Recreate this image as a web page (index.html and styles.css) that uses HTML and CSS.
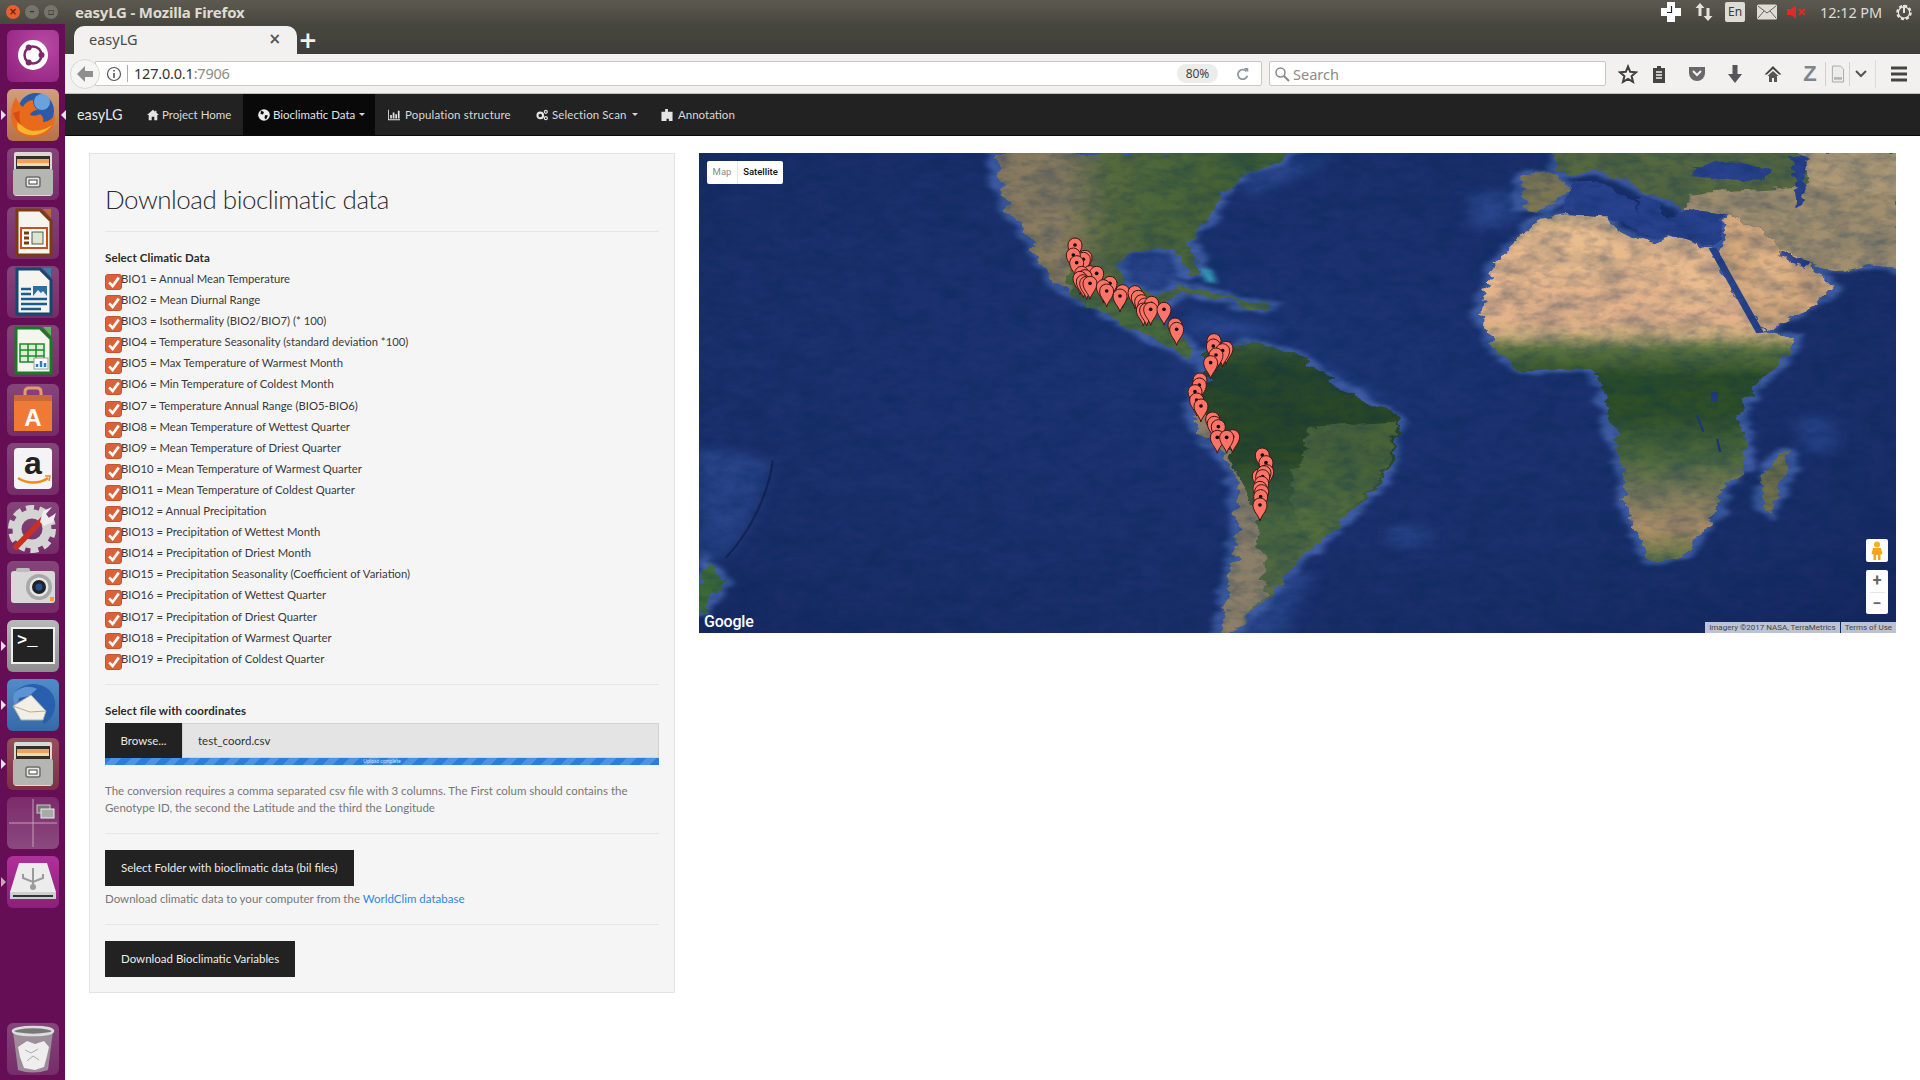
FILE: index.html
```html
<!DOCTYPE html>
<html lang="en">
<head>
<meta charset="utf-8">
<title>easyLG</title>
<link rel="stylesheet" href="styles.css">
</head>
<body>
<svg class="defs" width="0" height="0">
  <defs>
    <symbol id="i-cabinet" viewBox="0 0 52 52">
      <rect x="7" y="4" width="38" height="44" rx="2" fill="#d9d9d6"/>
      <rect x="9" y="8" width="34" height="13" fill="#33302c"/>
      <rect x="10" y="11" width="32" height="4" fill="#f0a15a"/>
      <rect x="10" y="15" width="32" height="3" fill="#f3d9ae"/>
      <rect x="6" y="21" width="40" height="26" rx="2" fill="#b5b5b1"/>
      <rect x="19" y="29" width="14" height="10" rx="2" fill="#e6e6e4" stroke="#6d6d6a" stroke-width="1.5"/>
      <rect x="22" y="32" width="8" height="4" fill="#fff" stroke="#444" stroke-width="1"/>
    </symbol>
    <symbol id="i-check" viewBox="0 0 17 16">
      <path d="M3.500 8.500 L7.500 12.500 L14.500 3" fill="none" stroke="#fff" stroke-width="3"/>
    </symbol>
    <g id="pin">
      <path d="M0 48C-4 30-21 20-21 0A21 21 0 1 1 21 0C21 20 4 30 0 48Z" fill="#fb7467" stroke="#3d1511" stroke-width="3"/>
      <circle r="5.500" fill="#120606"/>
    </g>
    <linearGradient id="g-na" x1="0" x2="1" y1="0" y2="0">
      <stop offset="0" stop-color="#85785e"/><stop offset=".22" stop-color="#8c7d60"/>
      <stop offset=".4" stop-color="#55693c"/><stop offset="1" stop-color="#3c5f31"/>
    </linearGradient>
    <linearGradient id="g-sa" x1="0" x2="0" y1="0" y2="1">
      <stop offset="0" stop-color="#3f5f30"/><stop offset=".1" stop-color="#28452a"/>
      <stop offset=".38" stop-color="#2b4825"/><stop offset=".6" stop-color="#4b673c"/>
      <stop offset=".8" stop-color="#536a40"/><stop offset="1" stop-color="#76735a"/>
    </linearGradient>
    <linearGradient id="g-af" x1="0" x2="0" y1="0" y2="1">
      <stop offset="0" stop-color="#c9ac82"/><stop offset=".06" stop-color="#e6b98c"/>
      <stop offset=".3" stop-color="#e4b28a"/><stop offset=".345" stop-color="#cfae7e"/>
      <stop offset=".39" stop-color="#5e7440"/><stop offset=".47" stop-color="#2e4f26"/>
      <stop offset=".58" stop-color="#2f5029"/><stop offset=".7" stop-color="#4f6a3c"/>
      <stop offset=".8" stop-color="#7a7a58"/><stop offset=".9" stop-color="#b09068"/>
      <stop offset="1" stop-color="#5f7443"/>
    </linearGradient>
    <radialGradient id="g-ocean" cx=".45" cy=".45" r=".8">
      <stop offset="0" stop-color="#1d3575"/><stop offset=".7" stop-color="#1a2e69"/><stop offset="1" stop-color="#15265c"/>
    </radialGradient>
    <filter id="f-soft" x="-5%" y="-5%" width="110%" height="110%">
      <feTurbulence type="fractalNoise" baseFrequency=".035" numOctaves="3" seed="4" result="n"/>
      <feDisplacementMap in="SourceGraphic" in2="n" scale="26" xChannelSelector="R" yChannelSelector="G"/>
      <feGaussianBlur stdDeviation="1"/>
    </filter>
    <filter id="f-shelf" x="-10%" y="-10%" width="120%" height="120%">
      <feTurbulence type="fractalNoise" baseFrequency=".03" numOctaves="3" seed="4" result="n"/>
      <feDisplacementMap in="SourceGraphic" in2="n" scale="26" xChannelSelector="R" yChannelSelector="G"/>
      <feGaussianBlur stdDeviation="4"/>
    </filter>
    <filter id="f-haze" x="-20%" y="-20%" width="140%" height="140%"><feGaussianBlur stdDeviation="12"/></filter>
    <filter id="f-blur" x="-30%" y="-30%" width="160%" height="160%"><feGaussianBlur stdDeviation="4"/></filter>
    <filter id="f-grain" x="0" y="0" width="100%" height="100%">
      <feTurbulence type="fractalNoise" baseFrequency=".03 .05" numOctaves="5" seed="7"/>
      <feColorMatrix values="0 0 0 0 0  0 0 0 0 0.02  0 0 0 0 0.08  2.2 0 0 0 -0.85"/>
    </filter>
    <filter id="f-fine" x="0" y="0" width="100%" height="100%">
      <feTurbulence type="fractalNoise" baseFrequency=".07 .14" numOctaves="3" seed="11"/>
      <feColorMatrix values="0 0 0 0 0  0 0 0 0 0.02  0 0 0 0 0.1  3 0 0 0 -1.3"/>
    </filter>
    <g id="land">
      <path id="l-na" d="M385 9H770L750 40 705 70 680 140 660 210 638 272 655 365 640 375 622 292 560 300 545 345 560 410 600 432 640 402 612 450 590 482 612 530 650 608 640 622 560 522 482 432 440 290 400 180Z"/>
      <path d="M440 280 470 390 462 395 436 300Z"/>
      <path d="M622 402 665 420 705 452 670 440 620 412Z"/>
      <path d="M700 450 745 458 735 475 700 468Z"/>
      <path id="l-sa" d="M660 600 720 570 782 612 830 700 915 800 890 990 840 1100 775 1240 742 1330 692 1445 678 1445 700 1200 700 960 650 830 640 760 662 680Z"/>
      <path id="l-af" d="M1095 205 1132 190 1185 195 1190 235 1245 282 1262 255 1305 282 1320 300 1345 420 1385 545 1425 560 1420 610 1370 720 1355 790 1366 930 1336 1010 1320 1100 1282 1210 1240 1226 1205 1060 1205 960 1180 740 1165 650 1075 660 1040 600 1020 520 1030 360 1060 280Z"/>
      <path id="l-ar" d="M1340 190 1385 240 1420 300 1450 350 1476 405 1456 460 1388 540 1350 430 1325 300Z"/>
      <path id="l-eu" d="M1115 9H1563V360L1530 340 1480 360 1445 340 1410 290 1385 240 1340 190 1285 180 1260 150 1235 130 1205 90 1170 62 1135 70 1115 60Z"/>
      <path id="l-ib" d="M1072 78 1116 68 1136 118 1098 182 1070 170Z"/>
      <path d="M1415 890 1420 950 1395 1080 1385 1060 1388 970Z"/>
      <path d="M10 1230 36 1290 15 1340 0 1385V1290Z"/>
    </g>
  </defs>
</svg>

<div class="desktop">
  <header class="panel-top">
    <div class="win-btns">
      <span class="wb wb-close">×</span><span class="wb wb-min">–</span><span class="wb wb-max">▫</span>
    </div>
    <span class="win-title">easyLG - Mozilla Firefox</span>
    <div class="tray">
      <svg class="tr" viewBox="0 0 22 22" width="22" height="22"><path d="M7 1h8v6h6v8h-6v6H7v-6H1V7h6Z" fill="#fff"/><path d="M11.500 5v6.500H7" fill="none" stroke="#222" stroke-width="1.200"/></svg>
      <svg class="tr t-m11" viewBox="0 0 20 20" width="20" height="20"><path d="M6 1 1.500 6H4.500v8h3V6h3ZM14 19l4.500-5h-3V6h-3v8h-3Z" fill="#e6e3dc"/></svg>
      <span class="tr-en">En</span>
      <svg class="tr t-m11" viewBox="0 0 20 16" width="20" height="16"><rect width="20" height="15" y=".5" rx="1.500" fill="#dfdcd5"/><path d="M1 2l9 7 9-7M1 14l6-7M19 14l-6-7" fill="none" stroke="#55534d" stroke-width=".9"/></svg>
      <svg class="tr t-m8" viewBox="0 0 20 14" width="20" height="14"><path d="M0 4h4l5-4v14l-5-4H0Z" fill="#e12a22"/><path d="M12 4l6 6M18 4l-6 6" stroke="#e12a22" stroke-width="2"/></svg>
      <span class="tr-time">12:12 PM</span>
      <svg class="tr t-m14" viewBox="0 0 20 20" width="20" height="20"><circle cx="10" cy="10.500" r="6.500" fill="none" stroke="#e6e3dc" stroke-width="2.600" stroke-dasharray="3 2"/><circle cx="10" cy="10.500" r="5.600" fill="none" stroke="#e6e3dc" stroke-width="1.200"/><path d="M10 3v8" stroke="#e6e3dc" stroke-width="2"/></svg>
    </div>
  </header>

  <div class="below">
    <nav class="launcher">
      <div class="tile t-dash"><svg viewBox="0 0 52 52"><circle cx="26" cy="25" r="15" fill="#fff"/><circle cx="26" cy="25" r="8.500" fill="none" stroke="#7d2a6b" stroke-width="2.500"/><circle cx="34.500" cy="25" r="3" fill="#7d2a6b"/><circle cx="21.700" cy="17.500" r="3" fill="#7d2a6b"/><circle cx="21.700" cy="32.500" r="3" fill="#7d2a6b"/></svg></div>
      <div class="tile t-fox act act-r"><svg viewBox="0 0 52 52"><circle cx="29" cy="22" r="18" fill="#2a5aa8"/><circle cx="35" cy="13" r="8" fill="#6aa3dc"/><path d="M9 8C2 20 2 36 11 43c9 8 27 7 34-4 2-4 3-8 3-13-3 4-7 7-12 7 1-3 0-6-3-8-3 2-7 2-10 1 1-3 4-5 8-5-3-2-5-5-5-10-4 0-8 3-10 7-3-2-6-6-7-10Z" fill="#ea6a1c"/><path d="M11 41c9 8 25 7 34-5-8 6-20 8-27 3-3-2-5-4-7-7-1 3-1 6 0 9Z" fill="#f7b52e"/><path d="M6 24c2 6 5 10 8 12-2-5-2-10-1-14Z" fill="#d94a14"/></svg></div>
      <div class="tile"><svg viewBox="0 0 52 52"><use href="#i-cabinet"/></svg></div>
      <div class="tile"><svg viewBox="0 0 52 52"><path d="M10 3H33L44 14V48H10Z" fill="#f5f4ef" stroke="#7c3a12" stroke-width="3"/><path d="M36 2H44V11Z" fill="#c1662f"/><rect x="14" y="21" width="26" height="20" fill="#fff" stroke="#c8501d" stroke-width="2"/><path d="M17 26h5M17 31h5M17 36h5" stroke="#7c3a12" stroke-width="3"/><rect x="25" y="25" width="11" height="12" fill="#dbe7d0" stroke="#555"/></svg></div>
      <div class="tile"><svg viewBox="0 0 52 52"><path d="M10 3H33L44 14V48H10Z" fill="#f5f4ef" stroke="#15476f" stroke-width="3"/><path d="M36 2H44V11Z" fill="#3a7fb0"/><path d="M14 23h10M14 28h10M14 33h26M14 38h26M14 43h20" stroke="#1a5c8f" stroke-width="2.500"/><rect x="26" y="20" width="14" height="10" fill="#2e6e9e"/><path d="M26 30l5-6 3 3 2-2 4 5Z" fill="#eef"/></svg></div>
      <div class="tile"><svg viewBox="0 0 52 52"><path d="M9 3H33L44 14V48H9Z" fill="#f5f4ef" stroke="#187a22" stroke-width="3"/><path d="M36 2H44V11Z" fill="#5cb85c"/><path d="M13 19H37V37H13ZM13 25H37M13 31H37M21 19V37M29 19V37" fill="#dff0d8" stroke="#1b8a26" stroke-width="1.500"/><rect x="27" y="33" width="14" height="11" fill="#fff" stroke="#999"/><path d="M30 42v-3M34 42v-6M38 42v-4" stroke="#2a7ad0" stroke-width="2.500"/></svg></div>
      <div class="tile"><svg viewBox="0 0 52 52"><path d="M18 12V8q0-4 4-4h8q4 0 4 4v4" fill="none" stroke="#e69a70" stroke-width="3"/><rect x="7" y="11" width="38" height="36" fill="#ef7a35"/><rect x="7" y="11" width="38" height="6" fill="#c9683a"/><text x="26" y="42" class="sw-a">A</text></svg></div>
      <div class="tile"><svg viewBox="0 0 52 52"><rect x="7" y="5" width="38" height="41" rx="4" fill="#f4f4f4"/><text x="26" y="31" class="az-a">a</text><path d="M11 35c9 6 22 6 30 0" fill="none" stroke="#f08a1d" stroke-width="2.500"/><path d="M38 33l5 0-1 5" fill="none" stroke="#f08a1d" stroke-width="1.500"/></svg></div>
      <div class="tile"><svg viewBox="0 0 52 52"><circle cx="25" cy="27" r="15" fill="none" stroke="#d4d4d4" stroke-width="9"/><circle cx="25" cy="27" r="21" fill="none" stroke="#d4d4d4" stroke-width="6" stroke-dasharray="8 5.200"/><path d="M9 45 36 17" stroke="#c93020" stroke-width="5.500" stroke-linecap="round"/><path d="M33 20 36 9 45 5 39 12 42 16 49 11 46 20 37 24Z" fill="#eee"/></svg></div>
      <div class="tile"><svg viewBox="0 0 52 52"><rect x="4" y="10" width="44" height="32" rx="3" fill="#d8d8d8"/><rect x="9" y="7" width="14" height="4" rx="2" fill="#bdbdbd"/><circle cx="32" cy="26" r="13" fill="#a8a8a8"/><circle cx="32" cy="26" r="9.500" fill="#e8e8e8"/><circle cx="32" cy="26" r="7" fill="#222"/><circle cx="32" cy="26" r="3.500" fill="#23508c"/><rect x="43" y="36" width="4" height="4" fill="#f2a020"/></svg></div>
      <div class="tile t-term act"><svg viewBox="0 0 52 52"><rect x="4" y="7" width="44" height="37" fill="#eee"/><rect x="6" y="9" width="40" height="33" fill="#232323"/><text x="10" y="25" class="term-t">&gt;_</text></svg></div>
      <div class="tile t-bird act"><svg viewBox="0 0 52 52"><path d="M8 13C18 2 38 2 46 16c5 10 1 24-9 29-3-8-10-10-20-14Z" fill="#2a5fb0"/><path d="M8 13c6-5 15-7 22-3l-8 7-10 2-4 8-2-8Z" fill="#5d93d4"/><path d="M6 27 24 16 39 32 36 41 14 41Z" fill="#f3efe4" stroke="#aaa"/><path d="M6 27 23 33 39 32" fill="none" stroke="#b5ad9c"/></svg></div>
      <div class="tile t-files act"><svg viewBox="0 0 52 52"><use href="#i-cabinet"/></svg></div>
      <div class="tile t-wsp"><svg viewBox="0 0 52 52"><path d="M2 26H50M26 2V50" stroke="#c79dbc" stroke-width="1"/><rect x="30" y="8" width="13" height="8" fill="#777" stroke="#ccc"/><rect x="34" y="12" width="13" height="9" fill="#aaa" stroke="#eee"/></svg></div>
      <div class="tile t-usb act act-o"><svg viewBox="0 0 52 52"><path d="M12 7H40L49 36H3Z" fill="#ececec"/><rect x="3" y="36" width="46" height="7" fill="#cfcfcf"/><rect x="6" y="39" width="40" height="2" fill="#333"/><path d="M26 12V30M16 18v4l10 4 10-4v-4" fill="none" stroke="#9a9a9a" stroke-width="2"/><circle cx="26" cy="31" r="3" fill="#9a9a9a"/></svg></div>
      <div class="tile tile-trash"><svg viewBox="0 0 52 52"><path d="M6 8H46L41 47Q26 52 11 47Z" fill="#a8a8a8" fill-opacity=".75"/><ellipse cx="26" cy="8" rx="20" ry="4" fill="#777" stroke="#ddd" stroke-width="2.500"/><path d="M11 24l9-6 8 3 9-3 5 6-2 9-3 11-9 3-11-2-4-11Z" fill="#eee"/><path d="M18 27l6 3 7-4M20 38l6-5 6 4" stroke="#aaa" fill="none"/></svg></div>
    </nav>

    <div class="browser">
      <div class="tabs">
        <div class="tab"><span>easyLG</span><b class="tab-x">×</b></div>
        <span class="tab-new">+</span>
      </div>
      <div class="toolbar">
        <div class="back"><svg viewBox="0 0 20 20" width="20" height="20"><path d="M10 2 2 10l8 8v-5h8V7h-8Z" fill="#8f8f8c"/></svg></div>
        <div class="url">
          <svg class="url-i" viewBox="0 0 16 16" width="16" height="16"><circle cx="8" cy="8" r="6.500" fill="none" stroke="#555" stroke-width="1.200"/><path d="M8 7v5M8 4v1.500" stroke="#555" stroke-width="1.600"/></svg>
          <span class="url-text">127.0.0.1<em>:7906</em></span>
          <span class="url-zoom">80%</span>
          <svg class="url-r" viewBox="0 0 16 16" width="14" height="14"><path d="M12 5A5.500 5.500 0 1 0 13 10" fill="none" stroke="#8a97a5" stroke-width="2"/><path d="M9 1l5 0 0 5Z" fill="#8a97a5"/></svg>
        </div>
        <div class="search">
          <svg viewBox="0 0 16 16" width="16" height="16"><circle cx="6.500" cy="6.500" r="4.500" fill="none" stroke="#888" stroke-width="1.500"/><path d="M10 10l5 5" stroke="#888" stroke-width="2"/></svg>
          <span>Search</span>
        </div>
        <div class="tools">
          <svg class="ti ti-first" viewBox="0 0 20 20"><path d="M10 2.500 12.200 7.800 18 8.300 13.600 12.100 15 17.800 10 14.800 5 17.800 6.400 12.100 2 8.300 7.800 7.800Z" fill="none" stroke="#3f3f3f" stroke-width="2"/></svg>
          <svg class="ti ti-11" viewBox="0 0 20 20"><path d="M4 4h4V2h4v2h4v15H4Z" fill="#444"/><path d="M7 8h6M7 11h6M7 14h6" stroke="#f2f1ef" stroke-width="1.500"/></svg>
          <svg class="ti" viewBox="0 0 20 20"><path d="M2 3H18V9A8 8 0 0 1 2 9Z" fill="#68686a"/><path d="M6 7l4 4 4-4" fill="none" stroke="#f2f1ef" stroke-width="2"/></svg>
          <svg class="ti" viewBox="0 0 20 20"><path d="M7.500 1h5v9h4.500L10 19 3 10h4.500Z" fill="#55555a"/></svg>
          <svg class="ti ti-17" viewBox="0 0 20 20"><path d="M10 2 1.500 10.500H4L10 5l6 5.500h2.500Z" fill="#444"/><path d="M10 7 4.500 12H6v6h3v-4h2v4h3v-6h1.500Z" fill="#555"/></svg>
          <span class="ti-z">Z</span>
          <svg class="ti ti-doc" viewBox="0 0 20 22"><path d="M3 1H13L17 5V21H3Z" fill="#ececea" stroke="#9a9a9a"/><rect x="5" y="15" width="10" height="3" fill="#b0b0ae"/></svg>
          <svg class="ti ti-chev" viewBox="0 0 14 14"><path d="M2 4l5 5 5-5" fill="none" stroke="#555" stroke-width="2"/></svg>
          <span class="ti-sep"></span>
          <svg class="ti ti-menu" viewBox="0 0 20 20"><path d="M2 4h16M2 10h16M2 16h16" stroke="#444" stroke-width="3"/></svg>
        </div>
      </div>

      <div class="navbar">
        <a class="brand">easyLG</a>
        <a class="nav n1"><svg viewBox="0 0 14 12"><path d="M7 0 0 6h2v6h3.500V8h3v4H12V6h2L11 3.400V1H9.500v1.100Z" fill="#e4e4e4"/></svg>Project Home</a>
        <a class="nav n2 active"><svg viewBox="0 0 12 12"><circle cx="6" cy="6" r="5.800" fill="#eee"/><path d="M3 1.500 6 3 5 5.500 2.500 5ZM7 6l3 .5L8 10.500 6.500 9Z" fill="#090909"/></svg>Bioclimatic Data<i class="caret"></i></a>
        <a class="nav n3"><svg viewBox="0 0 14 12"><path d="M0 0h1v11h13v1H0ZM2.500 6h2v4h-2ZM5.500 3h2v7h-2ZM8.500 5h2v5h-2ZM11.500 1h2v9h-2Z" fill="#e4e4e4"/></svg>Population structure</a>
        <a class="nav n4"><svg viewBox="0 0 14 13"><circle cx="5" cy="7" r="3.300" fill="none" stroke="#e4e4e4" stroke-width="2.400"/><circle cx="11.500" cy="2.800" r="1.700" fill="none" stroke="#e4e4e4" stroke-width="1.400"/><circle cx="11.500" cy="10.200" r="1.700" fill="none" stroke="#e4e4e4" stroke-width="1.400"/></svg>Selection Scan<i class="caret"></i></a>
        <a class="nav n5"><svg viewBox="0 0 12 13"><path d="M4 0h3v3h5v10H8V10.500H5.500V13H0V3h4Z" fill="#e4e4e4"/></svg>Annotation</a>
      </div>

      <main class="page">
        <section class="well">
          <h2 class="h-title">Download bioclimatic data</h2>
          <hr>
          <label class="lbl lbl-first">Select Climatic Data</label>
          <ul class="bio">
            <li><span class="cb"><svg><use href="#i-check"/></svg></span>BIO1 = Annual Mean Temperature</li>
            <li><span class="cb"><svg><use href="#i-check"/></svg></span>BIO2 = Mean Diurnal Range</li>
            <li><span class="cb"><svg><use href="#i-check"/></svg></span>BIO3 = Isothermality (BIO2/BIO7) (* 100)</li>
            <li><span class="cb"><svg><use href="#i-check"/></svg></span>BIO4 = Temperature Seasonality (standard deviation *100)</li>
            <li><span class="cb"><svg><use href="#i-check"/></svg></span>BIO5 = Max Temperature of Warmest Month</li>
            <li><span class="cb"><svg><use href="#i-check"/></svg></span>BIO6 = Min Temperature of Coldest Month</li>
            <li><span class="cb"><svg><use href="#i-check"/></svg></span>BIO7 = Temperature Annual Range (BIO5-BIO6)</li>
            <li><span class="cb"><svg><use href="#i-check"/></svg></span>BIO8 = Mean Temperature of Wettest Quarter</li>
            <li><span class="cb"><svg><use href="#i-check"/></svg></span>BIO9 = Mean Temperature of Driest Quarter</li>
            <li><span class="cb"><svg><use href="#i-check"/></svg></span>BIO10 = Mean Temperature of Warmest Quarter</li>
            <li><span class="cb"><svg><use href="#i-check"/></svg></span>BIO11 = Mean Temperature of Coldest Quarter</li>
            <li><span class="cb"><svg><use href="#i-check"/></svg></span>BIO12 = Annual Precipitation</li>
            <li><span class="cb"><svg><use href="#i-check"/></svg></span>BIO13 = Precipitation of Wettest Month</li>
            <li><span class="cb"><svg><use href="#i-check"/></svg></span>BIO14 = Precipitation of Driest Month</li>
            <li><span class="cb"><svg><use href="#i-check"/></svg></span>BIO15 = Precipitation Seasonality (Coefficient of Variation)</li>
            <li><span class="cb"><svg><use href="#i-check"/></svg></span>BIO16 = Precipitation of Wettest Quarter</li>
            <li><span class="cb"><svg><use href="#i-check"/></svg></span>BIO17 = Precipitation of Driest Quarter</li>
            <li><span class="cb"><svg><use href="#i-check"/></svg></span>BIO18 = Precipitation of Warmest Quarter</li>
            <li><span class="cb"><svg><use href="#i-check"/></svg></span>BIO19 = Precipitation of Coldest Quarter</li>
          </ul>
          <hr class="hr-a">
          <label class="lbl lbl-file">Select file with coordinates</label>
          <div class="file">
            <span class="browse">Browse...</span>
            <span class="fname">test_coord.csv</span>
          </div>
          <div class="progress">Upload complete</div>
          <p class="help">The conversion requires a comma separated csv file with 3 columns. The First colum should contains the Genotype ID, the second the Latitude and the third the Longitude</p>
          <hr class="hr-b">
          <a class="btn">Select Folder with bioclimatic data (bil files)</a>
          <p class="help help-b">Download climatic data to your computer from the <a class="link">WorldClim database</a></p>
          <hr class="hr-b">
          <a class="btn btn-last">Download Bioclimatic Variables</a>
        </section>

        <section class="map">
          <svg class="map-svg" viewBox="0 0 1197 480" preserveAspectRatio="none">
            <rect width="1197" height="480" fill="url(#g-ocean)"/>
            <g transform="scale(.7678 .3356) translate(0 -9)">
              <g filter="url(#f-haze)" fill="#2f4b94" opacity=".75">
                <path d="M0 880 92 925 70 1090 35 1210 0 1240Z"/>
                <path d="M780 620 890 730 860 760 800 690Z"/>
                <path d="M740 1260 800 1260 760 1449 700 1449Z"/>
                <path d="M1430 790 1475 800 1480 900 1440 900Z"/>
                <path d="M900 1120 950 1120 950 1180 900 1180Z"/>
                <path d="M1000 130 1060 120 1070 210 1010 240Z"/>
                <path d="M700 60 830 10 790 70 720 140Z"/>
                <path d="M560 310 620 300 630 400 590 420 555 380Z"/>
                <path d="M640 480 760 540 700 570 630 540Z"/>
              </g>
              <path d="M96 925C92 1010 70 1130 35 1215" fill="none" stroke="#0e1a42" stroke-width="3" stroke-opacity=".65"/>
              <g fill="#3f5da6" stroke="#3f5da6" stroke-width="20" filter="url(#f-shelf)"><use href="#land"/></g>
              <path d="M652 350 668 358 674 398 660 392Z" fill="#3aa7c4" filter="url(#f-blur)"/>
              <g filter="url(#f-soft)">
                <use href="#l-na" fill="url(#g-na)"/>
                <path d="M480 350 540 380 560 420 600 440 590 485 612 530 650 608 640 622 560 522 482 432Z" fill="#4c6a3a"/>
                <path d="M440 280 470 390 462 395 436 300Z" fill="#8c7b58"/>
                <path d="M622 402 665 420 705 452 670 440 620 412Z" fill="#4f6b3c"/>
                <path d="M700 450 745 458 735 475 700 468Z" fill="#4f6b3c"/>
                <use href="#l-sa" fill="url(#g-sa)"/>
                <path d="M660 790 700 950 728 1100 738 1325 692 1445 678 1445 700 1200 700 960 650 830 640 770Z" fill="#8b7f68"/>
                <path d="M800 820 910 810 885 990 830 1100 790 1180 770 1000Z" fill="#556f3f" opacity=".7"/>
                <use href="#l-af" fill="url(#g-af)"/>
                <use href="#l-ar" fill="#d6a97c"/>
                <use href="#l-eu" fill="#55683f"/>
                <path d="M1290 130 1430 110 1563 40V360L1530 340 1480 360 1445 340 1410 290 1385 240 1340 190 1285 180Z" fill="#a08e6e"/>
                <path d="M1430 9H1563V130L1450 110Z" fill="#b09a76"/>
                <use href="#l-ib" fill="#7c7654"/>
                <path d="M1415 890 1420 950 1395 1080 1385 1060 1388 970Z" fill="#6f7148"/>
                <path d="M10 1230 36 1290 15 1340 0 1385V1290Z" fill="#3d6a38"/>
              </g>
              <g fill="#2a438e" filter="url(#f-soft)">
                <path d="M1135 120 1120 190 1185 198 1245 272 1262 252 1318 285 1338 188 1290 178 1262 205 1235 135 1215 150 1225 190 1195 120 1170 88 1140 92Z"/>
                <path d="M1292 45 1330 30 1398 55 1388 92 1340 88 1295 78Z"/>
                <path d="M1420 14 1440 24 1440 165 1428 175 1430 100Z"/>
                <path d="M1410 298 1445 340 1438 352 1405 315Z"/>
              </g>
              <path d="M1320 292 1382 545" fill="none" stroke="#2a438e" stroke-width="10"/>
              <path d="M1318 722h9v28h-9Z" fill="#1f3a7d"/>
              <path d="M1300 790 1308 840M1326 860 1330 900" stroke="#1f3a7d" stroke-width="3"/>
              <g fill="#efc191" opacity=".5" filter="url(#f-haze)">
                <path d="M1090 240 1180 230 1200 340 1110 400Z"/>
                <path d="M1260 330 1320 360 1340 470 1270 480Z"/>
                <path d="M1370 270 1420 340 1410 430 1380 440Z"/>
              </g>
            </g>
            <rect width="1197" height="480" filter="url(#f-grain)" opacity=".24"/>
            <rect width="1197" height="480" filter="url(#f-fine)" opacity=".16"/>
            <g transform="translate(341 67) scale(.3333)">
              <use href="#pin" x="105" y="75"/><use href="#pin" x="135" y="112"/><use href="#pin" x="130" y="118"/><use href="#pin" x="100" y="105"/><use href="#pin" x="110" y="128"/>
              <use href="#pin" x="150" y="158"/><use href="#pin" x="170" y="160"/><use href="#pin" x="125" y="160"/><use href="#pin" x="135" y="170"/><use href="#pin" x="120" y="175"/>
              <use href="#pin" x="130" y="185"/><use href="#pin" x="140" y="190"/><use href="#pin" x="150" y="190"/><use href="#pin" x="210" y="190"/><use href="#pin" x="190" y="200"/>
              <use href="#pin" x="200" y="213"/><use href="#pin" x="248" y="215"/><use href="#pin" x="240" y="228"/><use href="#pin" x="285" y="218"/><use href="#pin" x="295" y="232"/>
              <use href="#pin" x="305" y="245"/><use href="#pin" x="315" y="255"/><use href="#pin" x="335" y="250"/><use href="#pin" x="310" y="270"/><use href="#pin" x="320" y="270"/>
              <use href="#pin" x="332" y="268"/><use href="#pin" x="372" y="268"/><use href="#pin" x="405" y="315"/><use href="#pin" x="410" y="328"/><use href="#pin" x="522" y="362"/>
              <use href="#pin" x="520" y="378"/><use href="#pin" x="558" y="385"/><use href="#pin" x="548" y="392"/><use href="#pin" x="528" y="405"/><use href="#pin" x="512" y="428"/>
              <use href="#pin" x="480" y="480"/><use href="#pin" x="478" y="495"/><use href="#pin" x="465" y="515"/><use href="#pin" x="470" y="540"/><use href="#pin" x="483" y="558"/>
              <use href="#pin" x="518" y="597"/><use href="#pin" x="523" y="610"/><use href="#pin" x="535" y="620"/><use href="#pin" x="578" y="650"/><use href="#pin" x="532" y="652"/>
              <use href="#pin" x="560" y="652"/><use href="#pin" x="667" y="705"/><use href="#pin" x="678" y="728"/><use href="#pin" x="680" y="755"/><use href="#pin" x="658" y="768"/>
              <use href="#pin" x="672" y="758"/><use href="#pin" x="668" y="770"/><use href="#pin" x="665" y="790"/><use href="#pin" x="660" y="805"/><use href="#pin" x="665" y="815"/>
              <use href="#pin" x="662" y="830"/><use href="#pin" x="660" y="855"/>
            </g>
          </svg>
          <div class="m-type"><span class="m-map">Map</span><span class="m-sat">Satellite</span></div>
          <div class="m-peg"><svg viewBox="0 0 12 20" width="12" height="20"><circle cx="6" cy="3.500" r="3" fill="#f4b01d"/><path d="M2 7h8l1.500 6-2 .5V19H7v-5H5v5H2.500v-5.500l-2-.5Z" fill="#f4a51d"/></svg></div>
          <div class="m-zoom"><span>+</span><i></i><span>−</span></div>
          <span class="m-google">Google</span>
          <div class="m-attr"><span>Imagery ©2017 NASA, TerraMetrics</span><span class="m-terms">Terms of Use</span></div>
        </section>
      </main>
    </div>
  </div>
</div>
</body>
</html>
```

FILE: styles.css
```css
* { box-sizing: border-box; }
html, body { margin: 0; height: 100%; overflow: hidden; background: #fff; }
body { font-family: "Lato", "Noto Sans", sans-serif; color: #333; }
.defs { position: absolute; }
.desktop { width: 1920px; height: 1080px; display: flex; flex-direction: column; overflow: hidden; background: #3d3c37; }

/* Ubuntu top panel */
.panel-top { height: 24px; flex: none; display: flex; align-items: center; background: linear-gradient(#5c5a50, #48473f); }
.win-btns { display: flex; gap: 5px; margin-left: 6px; width: 69px; }
.wb { width: 14px; height: 14px; border-radius: 50%; background: #76746b; color: #35342f; font: 700 10px/14px "DejaVu Sans", sans-serif; text-align: center; }
.wb-close { background: #e9602e; color: #6b2208; }
.win-title { font: 700 15px/24px "Noto Sans", sans-serif; color: #dfdbd2; letter-spacing: -.2px; }
.tray { margin-left: auto; display: flex; align-items: center; padding-right: 6px; }
.tr { flex: none; }
.t-m11 { margin-left: 12px; }
.t-m8 { margin-left: 10px; }
.t-m14 { margin-left: 12px; }
.tr-en { width: 20px; height: 20px; margin-left: 11px; background: #dfdcd5; border-radius: 2px; color: #3c3b37; font: 12px/20px "Noto Sans", sans-serif; text-align: center; }
.tr-time { margin-left: 13px; color: #dfdcd5; font: 14.500px/24px "Noto Sans", sans-serif; letter-spacing: -.1px; }

.below { flex: 1; display: flex; min-height: 0; }

/* Launcher */
.launcher { width: 65px; flex: none; background: #660e55; display: flex; flex-direction: column; align-items: center; gap: 7px; padding-top: 6px; position: relative; }
.tile { width: 52px; height: 52px; flex: none; border-radius: 6px; background: linear-gradient(#84457a, #762c69); position: relative; }
.tile svg { display: block; width: 100%; height: 100%; }
.t-dash { background: radial-gradient(circle at 70% 30%, #b84aa4, #8d1f7c); }
.t-fox { background: linear-gradient(#d0a080, #b8704a); }
.t-term { background: linear-gradient(#b8b8b8, #8e8e8e); }
.t-bird { background: linear-gradient(#4f8cc8, #356aa8); }
.t-files { background: linear-gradient(#93505a, #7c3045); }
.t-wsp { background: linear-gradient(#7c2a6a, #8a4a7f); }
.t-usb { background: linear-gradient(#b0309a, #8d1f7c); }
.tile-trash { margin-top: auto; margin-bottom: 5px; }
.act::before { content: ""; position: absolute; left: -6px; top: 21px; border: 5px solid transparent; border-left-color: #e8e0e6; }
.act-r::after { content: ""; position: absolute; right: -7px; top: 21px; border: 5px solid transparent; border-right-color: #e8e0e6; }
.act-o::before { border-left-color: #c9a5c0; }
.sw-a { font: 700 24px "Liberation Sans", sans-serif; fill: #fff; text-anchor: middle; }
.az-a { font: 700 32px "Liberation Sans", sans-serif; fill: #222; text-anchor: middle; }
.term-t { font: 700 17px "Liberation Mono", monospace; fill: #fff; }

/* Browser */
.browser { flex: 1; display: flex; flex-direction: column; min-width: 0; background: #fff; }
.tabs { height: 30px; flex: none; display: flex; align-items: flex-end; background: linear-gradient(#48473f, #3e3d38); padding-left: 9px; }
.tab { width: 223px; height: 28px; background: #f2f1ef; border-radius: 10px 10px 0 0; display: flex; align-items: center; justify-content: space-between; padding: 0 16px 2px 15px; font: 14.500px "Noto Sans", sans-serif; color: #4a4a48; }
.tab-x { font: 700 15px "DejaVu Sans", sans-serif; color: #555; }
.tab-new { color: #f2f1ef; font: 700 23px/28px "DejaVu Sans", sans-serif; margin-left: 0; width: 22px; text-align: center; }
.toolbar { height: 40px; flex: none; display: flex; align-items: center; background: #f2f1ef; border-bottom: 1px solid #bfbfbc; padding-left: 5px; }
.back { width: 30px; height: 30px; flex: none; border-radius: 50%; background: #f5f5f3; border: 1px solid #d8d8d5; display: flex; align-items: center; justify-content: center; margin-right: -5px; position: relative; z-index: 1; }
.url { flex: 1; min-width: 0; height: 25px; background: #fff; border: 1px solid #c8c8c5; border-radius: 0 2px 2px 0; display: flex; align-items: center; padding-left: 10px; }
.url-i { flex: none; }
.url-text { margin-left: 5px; padding-left: 6px; border-left: 1px solid #aaa; font: 14.500px/17px "Noto Sans", sans-serif; color: #333; letter-spacing: -.2px; }
.url-text em { font-style: normal; color: #8a8a8a; }
.url-zoom { margin-left: auto; width: 41px; height: 19px; border-radius: 9px; background: #ececea; font: 12px/19px "Noto Sans", sans-serif; color: #444; text-align: center; }
.url-r { margin: 0 11px 0 18px; flex: none; }
.search { width: 337px; flex: none; margin-left: 7px; height: 25px; background: #fff; border: 1px solid #c8c8c5; border-radius: 2px; display: flex; align-items: center; gap: 3px; padding-left: 4px; font: 14.500px "Noto Sans", sans-serif; color: #8b8b8b; }
.tools { width: 314px; flex: none; display: flex; align-items: center; }
.ti { width: 20px; height: 20px; flex: none; margin-left: 18px; }
.ti-first { margin-left: 12px; }
.ti-11 { margin-left: 11px; }
.ti-17 { margin-left: 18px; }
.ti-z { width: 16px; margin-left: 19px; font: 900 22px/22px "Liberation Sans", sans-serif; color: #7d8690; text-align: center; }
.ti-doc { margin-left: 7px; padding-left: 4px; border-left: 1px solid #d0d0ce; height: 24px; width: 21px; }
.ti-chev { margin-left: 3px; padding-left: 4px; border-left: 1px solid #d0d0ce; width: 19px; height: 24px; }
.ti-sep { width: 1px; height: 28px; margin-left: 7px; background: #dcdcda; flex: none; }
.ti-menu { margin-left: 13px; padding-left: 0; width: 20px; }

/* App navbar */
.navbar { height: 42px; flex: none; display: flex; align-items: stretch; background: #222; border-bottom: 1px solid #090909; padding-left: 12px; }
.brand { font-size: 14.400px; line-height: 41px; color: #e8e8e8; width: 55px; }
.nav { display: flex; align-items: center; gap: 3px; color: #d8d8d8; font-size: 11.500px; white-space: nowrap; }
.nav svg { width: 12px; height: 12px; flex: none; }
.n1 { padding-left: 15px; width: 111px; }
.n2 { padding-left: 15px; width: 132px; }
.n3 { padding-left: 13px; width: 148px; gap: 5px; letter-spacing: .15px; }
.n4 { padding-left: 13px; width: 124px; gap: 4px; letter-spacing: .1px; }
.n5 { padding-left: 14px; gap: 5px; }
.active { background: #090909; color: #e2e2e2; }
.caret { width: 0; height: 0; margin-left: 1px; border: 3px solid transparent; border-top-color: #d8d8d8; border-bottom: 0; }

/* Page */
.page { flex: 1; display: flex; align-items: flex-start; gap: 24px; padding: 17px 24px 0; min-height: 0; }
.well { width: 586px; flex: none; background: #f5f5f5; border: 1px solid #e3e3e3; padding: 0 15px 15px 15px; }
.h-title { margin: 0; padding: 25px 0 12px; font-size: 26px; letter-spacing: -.5px; line-height: 40px; font-weight: 300; color: #2b2b2b; white-space: nowrap; }
hr { margin: 0; border: 0; border-top: 1px solid #e6e6e6; }
.lbl { display: block; font-size: 11.500px; line-height: 17px; font-weight: 700; color: #2b2b2b; letter-spacing: .1px; }
.lbl-first { margin-top: 16.500px; }
.bio { list-style: none; margin: 5.500px 0 0; padding: 0; }
.bio li { height: 21.100px; display: flex; align-items: flex-start; font-size: 11.300px; line-height: 15px; color: #3a3a3a; white-space: nowrap; }
.cb { width: 17px; height: 16px; margin: 3px -1px 0 0; flex: none; border-radius: 3px; background: #d9623a; border: 1px solid #c2552f; display: block; }
.cb svg { display: block; width: 15px; height: 14px; }
.hr-a { margin-top: 12px; }
.lbl-file { margin-top: 17.500px; }
.file { display: flex; margin-top: 3.500px; height: 35px; }
.browse { width: 77px; background: #222; color: #e8e8e8; font-size: 11.500px; line-height: 35px; text-align: center; }
.fname { flex: 1; background: #e4e4e4; border: 1px solid #d2d2d2; padding-left: 15px; font-size: 11.500px; line-height: 33px; color: #333; }
.progress { height: 7px; background: repeating-linear-gradient(-45deg, #2b7de0 0 7px, #4f92e6 7px 14px); color: #cfe2f8; font-size: 5px; line-height: 7px; text-align: center; }
.help { margin: 17.500px 0 0; font-size: 11.500px; line-height: 17px; color: #777; }
.help-b { margin-top: 4.500px; }
.hr-b { margin-top: 16.500px; }
.btn { display: block; width: fit-content; height: 36px; margin-top: 16px; padding: 0 16px; background: #222; color: #ececec; font-size: 11.500px; line-height: 36.500px; }
.link { color: #2f86e8; }

/* Map */
.map { flex: 1; min-width: 0; height: 480px; position: relative; overflow: hidden; background: #1a2f6b; }
.map-svg { display: block; width: 100%; height: 100%; }
.m-type { position: absolute; left: 8px; top: 8px; height: 23px; display: flex; background: #fff; border-radius: 2px; font: 9.500px/22px "Roboto", sans-serif; }
.m-map { width: 31px; text-align: center; color: #8a8a8a; border-right: 1px solid #e6e6e6; }
.m-sat { width: 45px; text-align: center; color: #111; font-weight: 500; }
.m-peg { position: absolute; right: 8px; top: 386px; width: 22px; height: 23px; background: #fff; border-radius: 2px; display: flex; align-items: center; justify-content: center; }
.m-zoom { position: absolute; right: 8px; top: 417px; width: 22px; height: 44px; background: #fff; border-radius: 2px; display: flex; flex-direction: column; align-items: center; font: 700 16px/21.500px "Roboto", sans-serif; color: #666; }
.m-zoom i { width: 15px; height: 1px; background: #e6e6e6; flex: none; }
.m-google { position: absolute; left: 5px; bottom: 2px; color: #fff; font: 500 16px/18px "Roboto", sans-serif; letter-spacing: -.2px; }
.m-attr { position: absolute; right: 0; bottom: 0; height: 11px; display: flex; gap: 1px; font: 8px/11px "Roboto", sans-serif; color: #444; }
.m-attr span { background: rgba(255,255,255,.72); padding: 0 4px; white-space: nowrap; }
```
